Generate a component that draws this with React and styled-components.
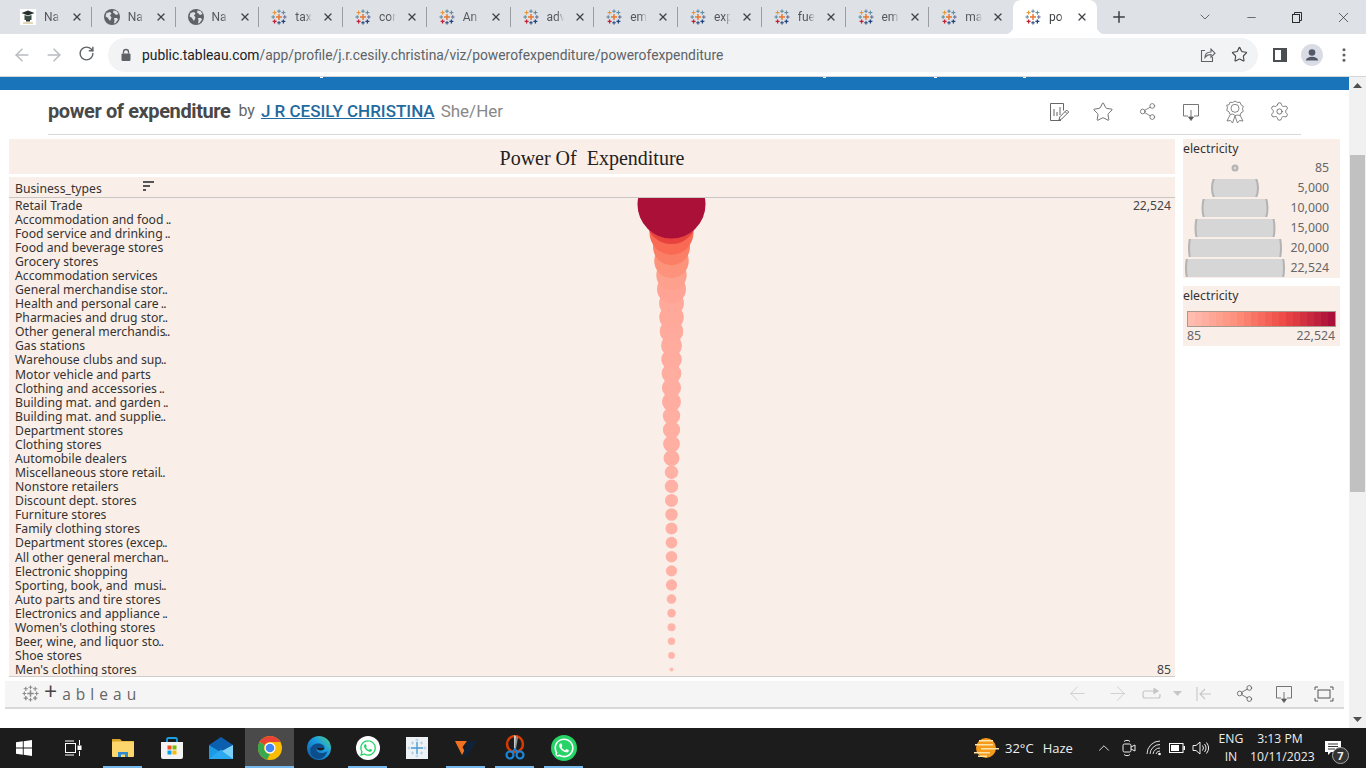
import React from "react";
import styled, { createGlobalStyle } from "styled-components";
import { FaWhatsapp } from "react-icons/fa";
import { ArrowLeft, ArrowRight, RotateCw, Star, X, Plus, Minus, ChevronDown, ChevronUp, Settings, Share2, EllipsisVertical } from "lucide-react";

const Global = createGlobalStyle`
  html, body { margin: 0; padding: 0; background: #fff; overflow: hidden; }
  * { box-sizing: border-box; }
`;
const BOOK = `"Noto Sans", "Open Sans", sans-serif`;
const UI = `Roboto, "Noto Sans", sans-serif`;
const TINT = "#faeee8";

const Screen = styled.div`width:1366px;height:768px;display:flex;flex-direction:column;overflow:hidden;font-family:${UI};`;
const TabStrip = styled.div`height:34px;background:#dee1e6;display:flex;padding-left:8px;flex:none;align-items:stretch;`;
const Tab = styled.div`
  position:relative;width:83.75px;flex:none;display:flex;align-items:center;padding:0 0 0 12px;
  border-radius:8px 8px 0 0;background:${p=>p.$active?"#fff":"transparent"};
  ${p=>p.$sep?`&::after{content:"";position:absolute;right:0;top:7px;height:20px;width:1px;background:#9a9da1;}`:""}
  ${p=>p.$active?`
    &::before{content:"";position:absolute;left:-8px;bottom:0;width:8px;height:8px;background:radial-gradient(circle at 0 0,transparent 8px,#fff 8.5px);}
    &::after{content:"";position:absolute;right:-8px;bottom:0;width:8px;height:8px;background:radial-gradient(circle at 100% 0,transparent 8px,#fff 8.5px);}
  `:""}
`;
const TabIcon = styled.span`width:16px;height:16px;flex:none;display:block;line-height:0;`;
const TabTitle = styled.span`
  margin-left:8px;width:17px;overflow:hidden;white-space:nowrap;font-size:12px;color:${p=>p.$active?"#3c4043":"#55595e"};
  -webkit-mask-image:linear-gradient(90deg,#000 60%,transparent 100%);mask-image:linear-gradient(90deg,#000 60%,transparent 100%);
`;
const TabClose = styled.span`margin-left:10px;line-height:0;color:#3f4347;display:block;`;
const NewTab = styled.span`width:44px;margin-left:0;display:flex;align-items:center;justify-content:center;color:#3c4043;`;
const WinControls = styled.div`margin-left:auto;display:flex;align-items:center;color:#2b2b2b;`;
const WinBtn = styled.span`width:46px;height:28px;display:flex;align-items:center;justify-content:center;`;

const ToolBar = styled.div`height:43px;flex:none;background:#fff;border-bottom:1px solid #d4d6d9;display:flex;align-items:center;padding-bottom:1px;`;
const NavBtn = styled.span`width:32px;display:flex;justify-content:center;color:${p=>p.$on?"#5f6368":"#b9bbbe"};`;
const NavGroup = styled.div`display:flex;padding-left:6px;width:108px;`;
const Omni = styled.div`width:1150px;height:34px;border-radius:17px;background:#f1f3f4;display:flex;align-items:center;padding:0 8px 0 12px;`;
const UrlText = styled.span`margin-left:10px;font-size:13.85px;color:#5f6368;white-space:nowrap;`;
const UrlHost = styled.span`color:#202124;`;
const OmniEnd = styled.div`margin-left:auto;display:flex;align-items:center;gap:15px;color:#5f6368;padding-right:2px;`;
const ToolEnd = styled.div`display:flex;align-items:center;color:#5f6368;padding-left:6px;`;
const ToolSlot = styled.span`width:32px;display:flex;justify-content:center;`;

const Viewport = styled.div`height:651px;flex:none;display:flex;`;
const Page = styled.div`width:1349px;background:#fff;display:flex;flex-direction:column;`;
const Band = styled.div`
  height:13px;flex:none;background-color:#1a74b9;
  background-image:linear-gradient(#fff,#fff),linear-gradient(#fff,#fff),linear-gradient(#fff,#fff),linear-gradient(#fff,#fff);
  background-size:3px 1px;background-repeat:no-repeat;
  background-position:320px 0,823px 0,934px 0,1023px 0;
`;
const VizHead = styled.div`height:45px;flex:none;margin:0 48px;border-bottom:1px solid #d8d8d8;display:flex;align-items:center;padding-bottom:3px;`;
const VizName = styled.span`font-size:20px;font-weight:700;color:#484848;letter-spacing:-0.4px;`;
const VizBy = styled.span`font-size:16px;color:#666;margin-left:8px;`;
const VizAuthor = styled.a`font-size:17px;font-weight:500;color:#1f6a9e;text-decoration:underline;margin-left:6px;`;
const VizPronoun = styled.span`font-size:17px;color:#888;margin-left:6px;`;
const HeadIcons = styled.div`margin-left:auto;margin-top:2px;display:flex;align-items:center;color:#666;`;
const HeadIcon = styled.span`width:44px;display:flex;justify-content:center;`;

const Dash = styled.div`display:flex;gap:8px;padding:4px 0 0 9px;`;
const Main = styled.div`width:1166px;flex:none;display:flex;flex-direction:column;`;
const TitleCard = styled.div`height:35px;padding-top:3px;background:${TINT};display:flex;align-items:center;justify-content:center;font-family:"Liberation Serif",serif;font-size:20px;color:#222;white-space:pre;`;
const ColHead = styled.div`margin-top:3px;height:21px;padding-top:2px;background:${TINT};border-bottom:1px solid #c9c7c5;display:flex;align-items:center;padding-left:6px;font-family:${BOOK};font-size:12.2px;color:#333;`;
const ColName = styled.span`width:128px;`;
const SortMark = styled.svg`display:block;margin-top:-4px;`;
const Rows = styled.div`position:relative;height:479px;padding-top:0.6px;background:${TINT};border-bottom:1px solid #cfcdcb;overflow:hidden;font-family:${BOOK};font-size:12.2px;color:#333;`;
const Row = styled.div`height:14.09px;line-height:14.09px;display:flex;justify-content:space-between;padding:0 4px 0 6px;white-space:pre;`;
const Tail = styled.span`letter-spacing:-0.8px;margin-left:-1px;`;
const Value = styled.span`color:#444;`;
const BubbleLayer = styled.svg`position:absolute;left:0;top:0;pointer-events:none;`;

const Side = styled.div`width:157px;flex:none;display:flex;flex-direction:column;gap:8px;font-family:${BOOK};font-size:12.3px;color:#444;`;
const Legend = styled.div`background:${TINT};height:${p=>p.$h}px;`;
const LegendTitle = styled.div`height:19px;line-height:19px;color:#333;`;
const SizeRow = styled.div`height:20px;display:flex;align-items:center;`;
const SizeSym = styled.svg`display:block;flex:none;`;
const SizeVal = styled.span`flex:1;text-align:right;padding-right:11px;margin-top:-2px;color:#666;`;
const Ramp = styled.div`margin:6px 4px 0 4px;height:16px;border:1px solid #a8988e;display:flex;`;
const RampStep = styled.span`flex:1;background:${p=>p.$c};`;
const RampLabels = styled.div`display:flex;justify-content:space-between;padding:0 5px 0 4px;color:#666;`;

const Foot = styled.div`margin:4px 5px 0;height:28px;flex:none;background:#f5f5f5;border-bottom:2px solid #d9d9d9;display:flex;align-items:center;padding:0 0 1px 17px;position:relative;`;
const Brand = styled.span`margin-left:5px;font-family:"Open Sans",sans-serif;font-size:15.5px;color:#666;letter-spacing:0.5px;white-space:pre;`;
const BrandPlus = styled.span`font-size:23px;color:#444;line-height:15px;`;
const FootIcons = styled.div`margin-left:auto;display:flex;align-items:center;color:#555;`;
const FootIcon = styled.span`width:${p=>p.$w||40}px;display:flex;justify-content:center;color:${p=>p.$dim?"#c6c6c6":"#555"};`;

const Scrollbar = styled.div`width:17px;background:#f1f1f1;display:flex;flex-direction:column;align-items:center;position:relative;`;
const ScrollArrow = styled.span`height:17px;display:flex;align-items:center;justify-content:center;flex:none;`;
const Thumb = styled.div`margin-top:61px;width:15px;height:337px;background:#c1c1c1;`;
const ScrollEnd = styled.div`margin-top:auto;`;

const Taskbar = styled.div`height:40px;flex:none;background:#1c1c1c;display:flex;align-items:stretch;font-family:"Open Sans",sans-serif;color:#eee;`;
const TaskSlot = styled.div`
  width:${p=>p.$w||49}px;flex:none;display:flex;align-items:center;justify-content:center;position:relative;
  background:${p=>p.$active?"#4a4a4a":"transparent"};
  ${p=>p.$run?`&::after{content:"";position:absolute;bottom:0;left:${p.$active?0:5}px;right:${p.$active?0:5}px;height:2px;background:#76b9ed;}`:""}
`;
const Tray = styled.div`margin-left:auto;display:flex;align-items:center;font-size:12px;padding-right:10px;`;
const Weather = styled.div`display:flex;align-items:center;gap:6px;font-size:13px;width:118px;`;
const HazeWord = styled.span`margin-left:3px;`;
const TrayIcon = styled.span`width:${p=>p.$w||24}px;display:flex;justify-content:center;`;
const TrayStack = styled.div`width:${p=>p.$w}px;text-align:center;line-height:18px;font-size:12.2px;white-space:nowrap;`;
const Notif = styled.div`width:46px;display:flex;justify-content:center;position:relative;`;
const Badge = styled.span`position:absolute;left:22px;top:7px;width:17px;height:17px;border-radius:50%;background:#333;border:1px solid #aaa;font-size:11px;font-weight:700;display:flex;align-items:center;justify-content:center;color:#eee;`;

const Cross = ({x,y,s,c,w=1}) => <path d={`M${x-s} ${y}H${x+s}M${x} ${y-s}V${y+s}`} stroke={c} strokeWidth={w} fill="none"/>;
const TableauMark = ({size=16,mono,light}) => {
  const c = mono ? (light||"#8a8a8a") : null;
  return (
  <svg width={size} height={size} viewBox="0 0 16 16" style={{display:"block"}}>
    <Cross x={8} y={8} s={3} c={c||"#e8762c"} w={1.4}/>
    <Cross x={8} y={2.2} s={1.8} c={c||"#5b879b"}/>
    <Cross x={8} y={13.8} s={1.8} c={c||"#1f457e"}/>
    <Cross x={2.2} y={8} s={1.8} c={c||"#59879b"}/>
    <Cross x={13.8} y={8} s={1.8} c={c||"#5c6692"}/>
    <Cross x={3.6} y={3.6} s={2} c={c||"#eb912b"}/>
    <Cross x={12.4} y={3.6} s={2} c={c||"#5b879b"}/>
    <Cross x={3.6} y={12.4} s={2} c={c||"#c72035"} w={1.3}/>
    <Cross x={12.4} y={12.4} s={2} c={c||"#1f457e"} w={1.3}/>
  </svg>);
};
const Globe = () => (
  <svg width="16" height="16" viewBox="0 0 16 16" style={{display:"block"}}>
    <circle cx="8" cy="8" r="8" fill="#5f6368"/>
    <path d="M2.5 4 6 3l1.5 1.5L6 6.5 7.5 8.5 6 12 3.5 8.5 1.5 7.5ZM9.5 1.5l3 .5 2 3-2.5 1-1.5-1.5-1.5-1ZM10 9h3l1 1.5-2.5 3.5-1.5.5 .5-3Z" fill="#dee1e6"/>
  </svg>
);
const SchoolIcon = () => (
  <svg width="16" height="16" viewBox="0 0 16 16" style={{display:"block"}}>
    <rect width="16" height="16" fill="#fff"/>
    <path d="M1.5 4 8 1.5 14.5 4 8 6.5Z" fill="#25302c"/>
    <path d="M4.5 6v5h7V6L8 7.2Z" fill="#3a4a45"/>
    <path d="M6 11h4v1.5H6Z" fill="#25302c"/>
    <path d="M3 14h10" stroke="#c9b26a" strokeWidth="1"/>
  </svg>
);
const LockIcon = () => (
  <svg width="12" height="14" viewBox="0 0 12 14" style={{display:"block"}}>
    <rect x="1.5" y="5.5" width="9" height="7.5" rx="1" fill="#5f6368"/>
    <path d="M3.5 5.5V4a2.5 2.5 0 0 1 5 0v1.5" stroke="#5f6368" strokeWidth="1.3" fill="none"/>
  </svg>
);
const ShareBox = () => (
  <svg width="16" height="16" viewBox="0 0 16 16" fill="none" stroke="#5f6368" strokeWidth="1.1" style={{display:"block"}}>
    <path d="M5 3.5H1.5v11h11V10"/><path d="M5 10.5c0-4 3-5.5 6-5.5V2.2l4 4-4 4V7.5c-2.5 0-4.500.8-6 3Z"/>
  </svg>
);
const SidePanel = () => (
  <svg width="14" height="14" viewBox="0 0 14 14" style={{display:"block"}}>
    <rect x="1" y="1" width="12" height="12" fill="none" stroke="#4a4e52" strokeWidth="2"/>
    <rect x="8" y="1" width="5" height="12" fill="#4a4e52"/>
  </svg>
);
const Avatar = () => (
  <svg width="22" height="22" viewBox="0 0 22 22" style={{display:"block"}}>
    <circle cx="11" cy="11" r="11" fill="#dadce5"/>
    <circle cx="11" cy="8.500" r="3.300" fill="#525a69"/>
    <path d="M4.800 16.500c.4-2.600 3-3.700 6.200-3.700s5.800 1.100 6.200 3.700Z" fill="#525a69"/>
  </svg>
);
const EditData = () => (
  <svg width="20" height="20" viewBox="0 0 20 20" fill="none" stroke="#666" strokeWidth="1" style={{display:"block"}}>
    <path d="M12 18.500H1.500V1.500h13v7"/><path d="M5 7v7M8 10v4M11 5v8"/><path d="M10 18l.7-3 7-7 2 2-7 7ZM16 9.500l2 2"/>
  </svg>
);
const Download = ({w=20,h=20}) => (
  <svg width={w} height={h} viewBox="0 0 20 20" fill="none" stroke="#666" strokeWidth="0.9" style={{display:"block"}}>
    <path d="M7 14H2.500V2.500h15V14H13"/><path d="M10 8v7" /><path d="M7.500 15h5L10 18.500Z" fill="#555"/>
  </svg>
);
const Rosette = () => (
  <svg width="20" height="24" viewBox="0 0 20 24" fill="none" stroke="#777" strokeWidth="0.9" style={{display:"block"}}>
    <path d="M10 1l2.300 1.500 2.700-.3 1 2.600 2.300 1.400-.8 2.600.8 2.600-2.300 1.400-1 2.600-2.700-.3L10 15.500l-2.300-1.400-2.700.3-1-2.600-2.300-1.400.8-2.600-.8-2.600L4 4.800l1-2.600 2.700.3Z"/>
    <circle cx="10" cy="8.300" r="4"/>
    <path d="M5 15l-3 6 3.500-.5L7.500 23l2.500-7M15 15l3 6-3.500-.5L12.500 23 10 16"/>
  </svg>
);
const FullScreen = () => (
  <svg width="20" height="16" viewBox="0 0 20 16" fill="none" stroke="#555" strokeWidth="1" style={{display:"block"}}>
    <path d="M1 4V1h3M16 1h3v3M19 12v3h-3M4 15H1v-3"/><rect x="4" y="4" width="12" height="8"/>
  </svg>
);
const SortIcon = () => (
  <SortMark width="11" height="10" viewBox="0 0 11 10"><path d="M0 0h11v2H0ZM0 4h7v2H0ZM0 8h3v2H0Z" fill="#555"/></SortMark>
);
const WinLogo = () => (
  <svg width="16" height="16" viewBox="0 0 16 16" style={{display:"block"}}>
    <path d="M0 2.300 6.800 1.300V7.500H0ZM7.700 1.200 16 0V7.500H7.700ZM0 8.400H6.800V14.700L0 13.700ZM7.700 8.400H16V16L7.700 14.800Z" fill="#fff"/>
  </svg>
);
const TaskView = () => (
  <svg width="18" height="16" viewBox="0 0 18 16" fill="none" stroke="#fff" strokeWidth="1" style={{display:"block"}}>
    <path d="M1 1h9M1 15h9"/><rect x="1.500" y="3.500" width="10" height="9"/><path d="M15.500 0v5M15.500 11v5"/><rect x="14" y="6" width="3" height="3.500" fill="#fff"/>
  </svg>
);
const Explorer = () => (
  <svg width="22" height="20" viewBox="0 0 22 20" style={{display:"block"}}>
    <path d="M0 1h8l2 2H22v3H0Z" fill="#d9a328"/>
    <rect y="3.500" width="22" height="15.500" rx="1" fill="#fbd66c"/>
    <path d="M6 19v-5h10v5h-3v-2.500H9V19Z" fill="#2e8bd0"/>
  </svg>
);
const StoreIcon = () => (
  <svg width="24" height="24" viewBox="0 0 24 24" style={{display:"block"}}>
    <path d="M7 6V3.500A1.500 1.500 0 0 1 8.500 2h7A1.500 1.500 0 0 1 17 3.500V6" fill="none" stroke="#1aa1e4" strokeWidth="1.800"/>
    <path d="M1 6h22v15a2 2 0 0 1-2 2H3a2 2 0 0 1-2-2Z" fill="#f4f4f4"/>
    <rect x="7.500" y="9.500" width="4" height="4" fill="#f25022"/><rect x="12.500" y="9.500" width="4" height="4" fill="#7fba00"/>
    <rect x="7.500" y="14.500" width="4" height="4" fill="#00a4ef"/><rect x="12.500" y="14.500" width="4" height="4" fill="#ffb900"/>
  </svg>
);
const MailIcon = () => (
  <svg width="24" height="22" viewBox="0 0 24 22" style={{display:"block"}}>
    <path d="M0 8 12 0 24 8 12 15Z" fill="#0b5fae"/>
    <path d="M0 8 12 15 24 8V22H0Z" fill="#1a9be6"/>
    <path d="M0 22 12 12.500 24 22Z" fill="#2aa9f0"/>
    <path d="M13 14 24 8V22Z" fill="#7bd0f7"/>
  </svg>
);
const ChromeIcon = () => (
  <svg width="24" height="24" viewBox="0 0 24 24" style={{display:"block"}}>
    <circle cx="12" cy="12" r="12" fill="#fbbc04"/>
    <path d="M12 0A12 12 0 0 1 22.400 6H12A6 6 0 0 0 6.800 9L1.600 6A12 12 0 0 1 12 0Z" fill="#ea4335"/>
    <path d="M1.600 6 6.800 9A6 6 0 0 0 12 18L9 23.600A12 12 0 0 1 1.600 6Z" fill="#34a853"/>
    <circle cx="12" cy="12" r="5.500" fill="#fff"/><circle cx="12" cy="12" r="4.300" fill="#4285f4"/>
  </svg>
);
const EdgeIcon = () => (
  <svg width="24" height="24" viewBox="0 0 24 24" style={{display:"block"}}>
    <defs><linearGradient id="edgeg" x1="0" y1="1" x2="1" y2="0"><stop offset="0" stopColor="#0c59a4"/><stop offset=".6" stopColor="#1b9de2"/><stop offset="1" stopColor="#52d17c"/></linearGradient></defs>
    <circle cx="12" cy="12" r="12" fill="url(#edgeg)"/>
    <path d="M3 14c1-4 4-6.500 8-6.500 3.500 0 6.500 1.500 6.500 4.500h-8c-.5 3 1.500 5 5 5 2 0 4-.6 6-2-1.500 5-5 8-9 8-4.500 0-9-4-8-9Z" fill="#0f4c8a"/>
    <path d="M9.500 12h8c0 1.500-2 2.500-4 2.500-2 0-3.500-1-4-2.500Z" fill="#1c1c1c"/>
  </svg>
);
const WaCircle = () => (
  <svg width="24" height="24" viewBox="0 0 24 24" style={{display:"block"}}>
    <circle cx="12" cy="12" r="12" fill="#fff"/>
  </svg>
);
const VMark = () => (
  <svg width="22" height="18" viewBox="0 0 22 18" style={{display:"block"}}>
    <path d="M0 2h12L7.500 8 9.500 12 7 16Z" fill="#f0711f"/>
    <path d="M12 2h10L12 17H7.500Z" fill="#0f2238"/>
  </svg>
);
const Snip = () => (
  <svg width="22" height="26" viewBox="0 0 22 26" style={{display:"block"}}>
    <circle cx="11" cy="9" r="8" fill="none" stroke="#d83b01" strokeWidth="2.500"/>
    <path d="M10 0 12 1l-.5 13H10Z" fill="#ccc"/><path d="M12.500 1 14 2l-2 12H11Z" fill="#999"/>
    <circle cx="6" cy="20" r="3.500" fill="none" stroke="#1a86d9" strokeWidth="2.200"/>
    <circle cx="16" cy="20" r="3.500" fill="none" stroke="#1a86d9" strokeWidth="2.200"/>
    <path d="M8 17.500 11 14l3 3.500" stroke="#1a86d9" strokeWidth="1.800" fill="none"/>
  </svg>
);
const Sun = () => (
  <svg width="26" height="20" viewBox="0 0 26 20" style={{display:"block"}}>
    <circle cx="13" cy="10" r="10" fill="#f59a1a"/>
    <path d="M6 2h14v1.500H6ZM2 6h18v1.500H2ZM8 10h18v1.500H8ZM1 14h16v1.500H1ZM5 17.500h9V19H5Z" fill="#fde3a6"/>
  </svg>
);
const CamIcon = () => (
  <svg width="14" height="18" viewBox="0 0 14 18" fill="none" stroke="#eee" strokeWidth="1" style={{display:"block"}}>
    <path d="M2 2.500C3 1 7 1 8 2.500M2 15.500c1 1.500 5 1.500 6 0"/><rect x="1" y="5" width="8" height="8" rx="1.500"/><path d="M9 8l4-2v6l-4-2"/>
  </svg>
);
const WifiIcon = () => (
  <svg width="16" height="16" viewBox="0 0 16 16" fill="none" stroke="#ddd" strokeWidth="1" style={{display:"block"}}>
    <path d="M1 14A13 13 0 0 1 14 1M4 14A10 10 0 0 1 14 4.500M7 14A7 7 0 0 1 14 8M10 14a4 4 0 0 1 4-3"/><circle cx="13.500" cy="14" r="1.300" fill="#fff" stroke="none"/>
  </svg>
);
const Battery = () => (
  <svg width="16" height="10" viewBox="0 0 16 10" style={{display:"block"}}>
    <rect x=".5" y=".5" width="13.500" height="9" fill="none" stroke="#fff"/><rect x="2" y="2" width="8" height="6" fill="#fff"/><rect x="14.500" y="3" width="1.500" height="4" fill="#fff"/>
  </svg>
);
const Speaker = () => (
  <svg width="17" height="14" viewBox="0 0 17 14" fill="none" stroke="#eee" strokeWidth="1" style={{display:"block"}}>
    <path d="M1 4.500h3L8 1v12L4 9.500H1Z"/><path d="M10.500 4.500a4 4 0 0 1 0 5M12.500 3a6.500 6.500 0 0 1 0 8M14.500 1.500a9 9 0 0 1 0 11"/>
  </svg>
);
const ChatIcon = () => (
  <svg width="16" height="16" viewBox="0 0 16 16" style={{display:"block"}}>
    <path d="M0 1h16v11H6l-3 3v-3H0Z" fill="#fff"/><path d="M3 4h10M3 6.500h10M3 9h7" stroke="#333" strokeWidth="1"/>
  </svg>
);
const RedoBox = () => (
  <svg width="20" height="12" viewBox="0 0 20 12" fill="none" stroke="#c6c6c6" strokeWidth="1.200" style={{display:"block"}}>
    <path d="M14 3H3a2 2 0 0 0-2 2v3a2 2 0 0 0 2 2h13a2 2 0 0 0 2-2V6"/><path d="M12 0.500 16 3 12 5.500Z" fill="#c6c6c6"/>
  </svg>
);
const Caret = ({c="#c6c6c6",up}) => (
  <svg width="9" height="5" viewBox="0 0 9 5" style={{display:"block"}}><path d={up?"M0 5 4.500 0 9 5Z":"M0 0h9L4.500 5Z"} fill={c}/></svg>
);
const ResetBack = () => (
  <svg width="16" height="16" viewBox="0 0 16 16" fill="none" stroke="#c6c6c6" strokeWidth="1.100" style={{display:"block"}}>
    <path d="M1 1v14M15 8H4M9 3 4 8l5 5"/>
  </svg>
);

const TABS = [
  ["Na","school"],["Na","globe"],["Na","globe"],["tax","t"],["cor","t"],["An","t"],["adv","t"],["em","t"],["exp","t"],["fue","t"],["em","t"],["ma","t"],["po","t"],
];
const ROWS = ["Retail Trade","Accommodation and food ..","Food service and drinking ..","Food and beverage stores","Grocery stores","Accommodation services","General merchandise stor..","Health and personal care ..","Pharmacies and drug stor..","Other general merchandis..","Gas stations","Warehouse clubs and sup..","Motor vehicle and parts","Clothing and accessories ..","Building mat. and garden ..","Building mat. and supplie..","Department stores","Clothing stores","Automobile dealers","Miscellaneous store retail..","Nonstore retailers","Discount dept. stores","Furniture stores","Family clothing stores","Department stores (excep..","All other general merchan..","Electronic shopping","Sporting, book, and  musi..","Auto parts and tire stores","Electronics and appliance ..","Women's clothing stores","Beer, wine, and liquor sto..","Shoe stores","Men's clothing stores"];
const RADII = [34,25.5,22,18.5,17.3,15.2,14.5,12.4,12.2,11.7,10.5,10.2,9.9,9.6,9.5,8.7,8.6,8.4,8,6.7,6.7,6.5,6.3,6,5.8,5.8,5.6,5.6,4.8,4.3,4,3.7,3.4,2];
const FILLS = ["#ab1039","#e8423f","#f96a54","#fb7f66","#fe937c","#fea08e","#ffa494","#ffa99b","#ffa99b","#ffaa9d","#ffac9f","#ffac9f","#ffada1","#ffada1","#ffada1","#ffaea2","#ffaea2","#ffaea2","#ffaea2","#ffb1a6","#ffb1a6","#ffb1a6","#ffb1a6","#ffb1a6","#ffb1a6","#ffb1a6","#ffb1a6","#ffb1a6","#ffb3a8","#ffb3a8","#ffb5ab","#ffb5ab","#ffb5ab","#ffbbb0"];
const SIZES = [["85",7],["5,000",48],["10,000",67],["15,000",81],["20,000",94],["22,524",100]];
const lerp=(a,b,t)=>Math.round(a+(b-a)*t);
const STEPS = Array.from({length:21},(_,i)=>{
  const stops=[[255,189,176],[253,141,120],[238,72,68],[169,15,58]];
  const t=i/20*3; const k=Math.min(2,Math.floor(t)); const f=t-k;
  return `rgb(${lerp(stops[k][0],stops[k+1][0],f)},${lerp(stops[k][1],stops[k+1][1],f)},${lerp(stops[k][2],stops[k+1][2],f)})`;
});
const Label = ({text}) => {
  const m = text.match(/^(.*?)(\.\.)$/);
  return m ? <span>{m[1]}<Tail>{m[2]}</Tail></span> : <span>{text}</span>;
};

export default function App() {
  return (
    <Screen>
      <Global/>
      <TabStrip>
        {TABS.map(([t,k],i)=>(
          <Tab key={i} $active={i===12} $sep={i<11}>
            <TabIcon>{k==="school"?<SchoolIcon/>:k==="globe"?<Globe/>:<TableauMark/>}</TabIcon>
            <TabTitle $active={i===12}>{t}</TabTitle>
            <TabClose><X size={12} strokeWidth={2.6}/></TabClose>
          </Tab>
        ))}
        <NewTab><Plus size={18} strokeWidth={2}/></NewTab>
        <WinControls>
          <WinBtn><ChevronDown size={16} strokeWidth={1}/></WinBtn>
          <WinBtn><Minus size={13} strokeWidth={1.2}/></WinBtn>
          <WinBtn>
            <svg width="10" height="11" viewBox="0 0 10 11" fill="none" stroke="#2b2b2b" strokeWidth="1" style={{display:"block"}}><rect x=".5" y="2.500" width="7" height="8"/><path d="M2.500 2.500V.5h7v8h-2"/></svg>
          </WinBtn>
          <WinBtn><X size={17} strokeWidth={1}/></WinBtn>
        </WinControls>
      </TabStrip>
      <ToolBar>
        <NavGroup>
          <NavBtn><ArrowLeft size={20} strokeWidth={1.8}/></NavBtn>
          <NavBtn><ArrowRight size={20} strokeWidth={1.8}/></NavBtn>
          <NavBtn $on><RotateCw size={17} strokeWidth={2}/></NavBtn>
        </NavGroup>
        <Omni>
          <LockIcon/>
          <UrlText><UrlHost>public.tableau.com</UrlHost>/app/profile/j.r.cesily.christina/viz/powerofexpenditure/powerofexpenditure</UrlText>
          <OmniEnd><ShareBox/><Star size={17} strokeWidth={1.6} color="#45494d"/></OmniEnd>
        </Omni>
        <ToolEnd>
          <ToolSlot><SidePanel/></ToolSlot>
          <ToolSlot><Avatar/></ToolSlot>
          <ToolSlot><EllipsisVertical size={18} strokeWidth={2.2}/></ToolSlot>
        </ToolEnd>
      </ToolBar>
      <Viewport>
        <Page>
          <Band/>
          <VizHead>
            <VizName>power of expenditure</VizName>
            <VizBy>by</VizBy>
            <VizAuthor>J R CESILY CHRISTINA</VizAuthor>
            <VizPronoun>She/Her</VizPronoun>
            <HeadIcons>
              <HeadIcon><EditData/></HeadIcon>
              <HeadIcon><Star size={22} strokeWidth={1}/></HeadIcon>
              <HeadIcon><Share2 size={19} strokeWidth={1}/></HeadIcon>
              <HeadIcon><Download/></HeadIcon>
              <HeadIcon><Rosette/></HeadIcon>
              <HeadIcon><Settings size={21} strokeWidth={1}/></HeadIcon>
            </HeadIcons>
          </VizHead>
          <Dash>
            <Main>
              <TitleCard>{"Power Of  Expenditure"}</TitleCard>
              <ColHead><ColName>Business_types</ColName><SortIcon/></ColHead>
              <Rows>
                {ROWS.map((r,i)=>(
                  <Row key={i}><Label text={r}/>{i===0&&<Value>22,524</Value>}{i===33&&<Value>85</Value>}</Row>
                ))}
                <BubbleLayer width="1166" height="479">
                  {RADII.map((_,j)=>{const i=RADII.length-1-j;return <circle key={i} cx="662.500" cy={6.500+14.09*i} r={RADII[i]} fill={FILLS[i]}/>;})}
                </BubbleLayer>
              </Rows>
            </Main>
            <Side>
              <Legend $h={139}>
                <LegendTitle>electricity</LegendTitle>
                {SIZES.map(([v,d],i)=>(
                  <SizeRow key={i}>
                    <SizeSym width="104" height="18" viewBox="0 0 104 18">
                      <circle cx="52" cy="9" r={d/2-1} fill="#d6d6d6" stroke="#b3b3b3" strokeWidth="2"/>
                    </SizeSym>
                    <SizeVal>{v}</SizeVal>
                  </SizeRow>
                ))}
              </Legend>
              <Legend $h={60}>
                <LegendTitle>electricity</LegendTitle>
                <Ramp>{STEPS.map((c,i)=><RampStep key={i} $c={c}/>)}</Ramp>
                <RampLabels><span>85</span><span>22,524</span></RampLabels>
              </Legend>
            </Side>
          </Dash>
          <Foot>
            <TableauMark size={17} mono/>
            <Brand><BrandPlus>+</BrandPlus>{" a b l e a u"}</Brand>
            <FootIcons>
              <FootIcon $dim $w={46}><ArrowLeft size={23} strokeWidth={0.8}/></FootIcon>
              <FootIcon $dim $w={34}><ArrowRight size={23} strokeWidth={0.8}/></FootIcon>
              <FootIcon $dim $w={36}><RedoBox/></FootIcon>
              <FootIcon $dim $w={14}><Caret/></FootIcon>
              <FootIcon $dim $w={40}><ResetBack/></FootIcon>
              <FootIcon $w={40}><Share2 size={19} strokeWidth={1}/></FootIcon>
              <FootIcon $w={40}><Download/></FootIcon>
              <FootIcon $w={40}><FullScreen/></FootIcon>
            </FootIcons>
          </Foot>
        </Page>
        <Scrollbar>
          <ScrollArrow><Caret c="#505050" up/></ScrollArrow>
          <Thumb/>
          <ScrollEnd><ScrollArrow><Caret c="#505050"/></ScrollArrow></ScrollEnd>
        </Scrollbar>
      </Viewport>
      <Taskbar>
        <TaskSlot $w={48}><WinLogo/></TaskSlot>
        <TaskSlot $w={50}><TaskView/></TaskSlot>
        <TaskSlot $run><Explorer/></TaskSlot>
        <TaskSlot><StoreIcon/></TaskSlot>
        <TaskSlot><MailIcon/></TaskSlot>
        <TaskSlot $run $active><ChromeIcon/></TaskSlot>
        <TaskSlot><EdgeIcon/></TaskSlot>
        <TaskSlot $run>
          <WaCircle/>
          <FaWhatsapp size={18} color="#25d366" style={{position:"absolute"}}/>
        </TaskSlot>
        <TaskSlot>
          <svg width="22" height="22" viewBox="0 0 22 22" style={{display:"block"}}><rect width="22" height="22" fill="#eef2f5"/><path d="M11 5v12M5 11h12" stroke="#4a9bd4" strokeWidth="1.400"/><path d="M5 6h3M6.500 4.500v3M14 6h3M15.500 4.500v3M5 16h3M6.500 14.500v3M14 16h3M15.500 14.500v3M9.500 3h3M11 1.500v3M9.500 19h3M11 17.500v3M1.500 11h3M3 9.500v3M17.500 11h3M19 9.500v3" stroke="#a9cfe9" strokeWidth="1"/></svg>
        </TaskSlot>
        <TaskSlot $run><VMark/></TaskSlot>
        <TaskSlot $run><Snip/></TaskSlot>
        <TaskSlot $run><FaWhatsapp size={26} color="#fff" style={{background:"#25d366",borderRadius:"50%",padding:2}}/></TaskSlot>
        <Tray>
          <Weather><Sun/><span>32°C</span><HazeWord>Haze</HazeWord></Weather>
          <TrayIcon $w={26}><ChevronUp size={18} strokeWidth={1.2}/></TrayIcon>
          <TrayIcon $w={24}><CamIcon/></TrayIcon>
          <TrayIcon $w={25}><WifiIcon/></TrayIcon>
          <TrayIcon $w={22}><Battery/></TrayIcon>
          <TrayIcon $w={24}><Speaker/></TrayIcon>
          <TrayStack $w={38}>ENG<br/>IN</TrayStack>
          <TrayStack $w={60}>3:13 PM<br/>10/11/2023</TrayStack>
          <Notif><ChatIcon/><Badge>7</Badge></Notif>
        </Tray>
      </Taskbar>
    </Screen>
  );
}
